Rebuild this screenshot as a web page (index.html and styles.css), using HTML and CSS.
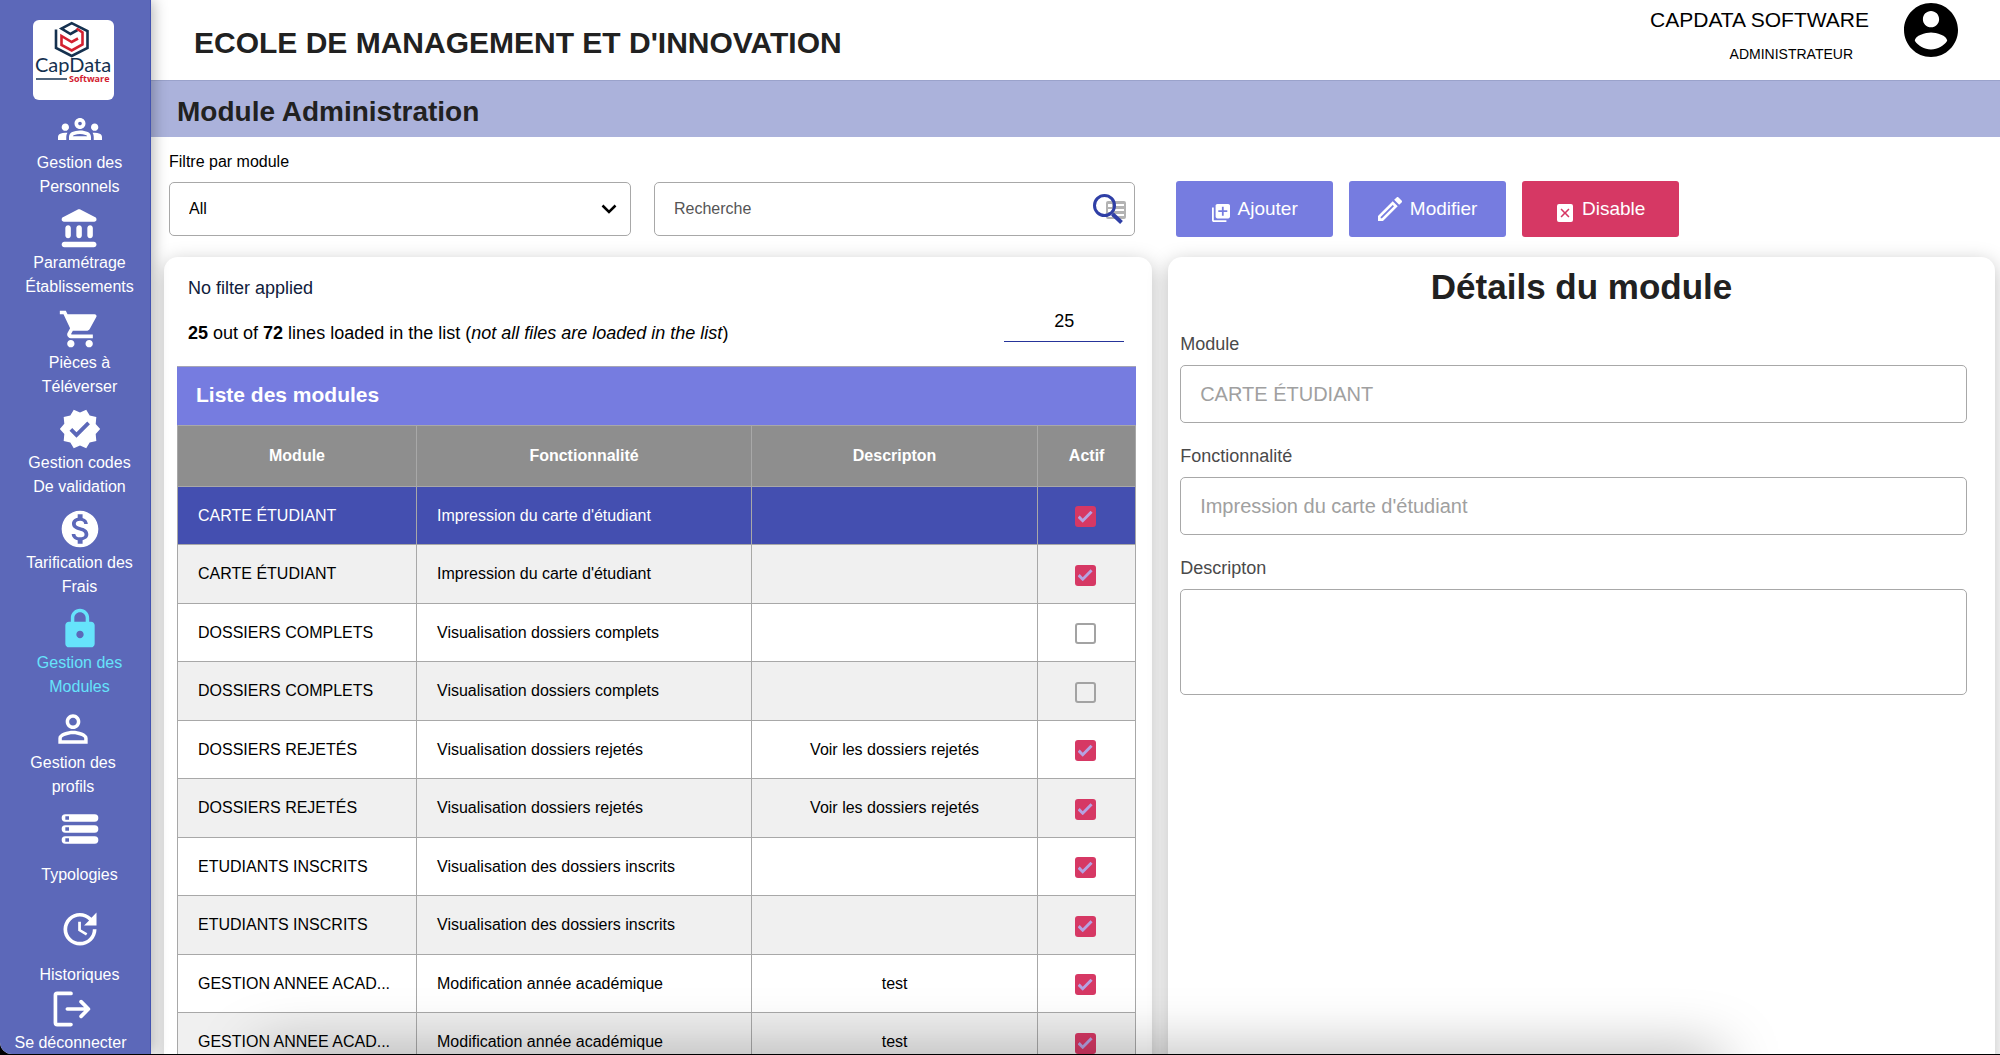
FILE: index.html
```html
<!DOCTYPE html>
<html lang="fr">
<head>
<meta charset="utf-8">
<meta name="viewport" content="width=device-width, initial-scale=1">
<title>Module Administration</title>
<link rel="stylesheet" href="styles.css">
</head>
<body>
<div class="app">
  <aside class="sidebar">
    <a class="brand" href="#" aria-label="CapData Software">
      <svg viewBox="0 0 81 80" width="81" height="80" aria-hidden="true">
        <g fill="none" stroke-width="2.600">
          <path stroke="#15314f" d="M23 9.500v18.500L38.700 36 54.500 28V11L38.700 3.200 28.500 8.500l9 5.500 7-4"/>
          <path stroke="#d3202f" d="M43.500 8.500l6 4v12L38.700 30.500 28.500 25V16l10.200 6 6.300-3.500"/>
        </g>
        <text class="brand-name" x="2" y="52">CapData</text>
        <path d="M3 59h31" stroke="#15314f" stroke-width="1.500"/>
        <text class="brand-sub" x="36" y="62">Software</text>
      </svg>
    </a>
    <nav>
      <ul class="menu">
        <li><a href="#"><svg class="ico" viewBox="0 0 24 24"><path d="M4 13c1.100 0 2-.9 2-2s-.9-2-2-2-2 .9-2 2 .9 2 2 2zm1.130 1.100C4.760 14.040 4.390 14 4 14c-.99 0-1.930.21-2.780.58C.48 14.900 0 15.620 0 16.430V18h4.500v-1.610c0-.83.23-1.610.63-2.290zM20 13c1.100 0 2-.9 2-2s-.9-2-2-2-2 .9-2 2 .9 2 2 2zm4 3.430c0-.81-.48-1.530-1.220-1.850-.85-.37-1.790-.58-2.780-.58-.39 0-.76.04-1.130.1.400.68.630 1.460.63 2.290V18H24v-1.570zM16.240 13.650c-1.170-.52-2.610-.9-4.240-.9s-3.070.39-4.240.9C6.680 14.130 6 15.210 6 16.390V18h12v-1.610c0-1.180-.68-2.260-1.760-2.740zM8.070 16c.09-.23.13-.39.910-.69.97-.38 1.990-.56 3.020-.56s2.050.18 3.020.56c.77.3.81.46.910.69H8.070zM12 8c.55 0 1 .45 1 1s-.45 1-1 1-1-.45-1-1 .45-1 1-1m0-2C10.340 6 9 7.340 9 9s1.340 3 3 3 3-1.340 3-3-1.340-3-3-3z"/></svg><span>Gestion des<br>Personnels</span></a></li>
        <li><a href="#"><svg class="ico" viewBox="0 0 24 24"><path d="M4 11.500v4c0 .83.67 1.500 1.500 1.500S7 16.330 7 15.500v-4c0-.83-.67-1.500-1.500-1.500S4 10.670 4 11.500zm6 0v4c0 .83.67 1.500 1.500 1.500s1.500-.67 1.500-1.500v-4c0-.83-.67-1.500-1.500-1.500s-1.500.67-1.500 1.500zM3.500 22h16c.83 0 1.500-.67 1.500-1.500s-.67-1.500-1.500-1.500h-16c-.83 0-1.500.67-1.500 1.500S2.670 22 3.500 22zM16 11.500v4c0 .83.67 1.500 1.500 1.500s1.500-.67 1.500-1.500v-4c0-.83-.67-1.500-1.500-1.500s-1.500.67-1.500 1.500zM10.570 1.490l-7.900 4.160c-.41.210-.67.640-.67 1.100C2 7.440 2.560 8 3.250 8h16.510C20.440 8 21 7.440 21 6.750c0-.46-.26-.89-.67-1.100l-7.900-4.160c-.58-.31-1.280-.31-1.860 0z"/></svg><span>Paramétrage<br>Établissements</span></a></li>
        <li><a href="#"><svg class="ico" viewBox="0 0 24 24"><path d="M7 18c-1.100 0-1.990.9-1.990 2S5.900 22 7 22s2-.9 2-2-.9-2-2-2zM1 2v2h2l3.600 7.590-1.350 2.450c-.16.280-.25.610-.25.960 0 1.100.9 2 2 2h12v-2H7.420c-.14 0-.25-.11-.25-.25l.03-.12.9-1.630h7.450c.75 0 1.410-.41 1.750-1.030l3.580-6.490c.08-.14.120-.31.120-.48 0-.55-.45-1-1-1H5.210l-.94-2H1zm16 16c-1.100 0-1.990.9-1.990 2s.89 2 1.990 2 2-.9 2-2-.9-2-2-2z"/></svg><span>Pièces à<br>Téléverser</span></a></li>
        <li><a href="#"><svg class="ico" viewBox="0 0 24 24"><path d="M23 12l-2.440-2.790.34-3.690-3.610-.82-1.890-3.200L12 2.960 8.600 1.500 6.710 4.690 3.100 5.500l.34 3.700L1 12l2.440 2.790-.34 3.700 3.610.82L8.600 22.500l3.400-1.470 3.400 1.460 1.890-3.190 3.610-.82-.34-3.690L23 12zm-12.910 4.720l-3.800-3.810 1.480-1.480 2.320 2.330 5.850-5.870 1.480 1.480-7.330 7.350z"/></svg><span>Gestion codes<br>De validation</span></a></li>
        <li><a href="#"><svg class="ico" viewBox="0 0 24 24"><path d="M12 2C6.480 2 2 6.480 2 12s4.480 10 10 10 10-4.480 10-10S17.520 2 12 2zm1.410 16.090V20h-2.670v-1.930c-1.710-.36-3.160-1.460-3.270-3.400h1.960c.1 1.050.82 1.870 2.650 1.870 1.960 0 2.400-.98 2.400-1.590 0-.83-.44-1.610-2.670-2.140-2.480-.6-4.180-1.620-4.180-3.670 0-1.720 1.390-2.840 3.110-3.210V4h2.670v1.950c1.860.45 2.790 1.860 2.850 3.390H14.300c-.05-1.110-.64-1.870-2.220-1.870-1.500 0-2.400.68-2.400 1.640 0 .84.65 1.390 2.670 1.910s4.180 1.390 4.180 3.910c-.01 1.830-1.380 2.830-3.120 3.160z"/></svg><span>Tarification des<br>Frais</span></a></li>
        <li><a class="active" href="#" aria-current="page"><svg class="ico" viewBox="0 0 24 24"><path d="M18 8h-1V6c0-2.760-2.240-5-5-5S7 3.240 7 6v2H6c-1.100 0-2 .9-2 2v10c0 1.100.9 2 2 2h12c1.100 0 2-.9 2-2V10c0-1.100-.9-2-2-2zm-6 9c-1.100 0-2-.9-2-2s.9-2 2-2 2 .9 2 2-.9 2-2 2zm3.100-9H8.900V6c0-1.710 1.390-3.100 3.100-3.100s3.100 1.390 3.100 3.100v2z"/></svg><span>Gestion des<br>Modules</span></a></li>
        <li class="shifted"><a href="#"><svg class="ico" viewBox="0 0 24 24"><path d="M12 5.900c1.160 0 2.100.94 2.100 2.100s-.94 2.100-2.100 2.100S9.900 9.160 9.900 8s.94-2.100 2.100-2.100m0 9c2.970 0 6.100 1.460 6.100 2.100v1.100H5.900V17c0-.64 3.130-2.100 6.100-2.100M12 4C9.790 4 8 5.790 8 8s1.790 4 4 4 4-1.790 4-4-1.790-4-4-4zm0 9c-2.670 0-8 1.340-8 4v3h16v-3c0-2.660-5.330-4-8-4z"/></svg><span>Gestion des<br>profils</span></a></li>
        <li class="single"><a href="#"><svg class="ico" viewBox="0 0 24 24"><path fill-rule="evenodd" d="M4 4h16a2 2 0 0 1 0 4H4a2 2 0 0 1 0-4zm0 1v2h2V5zM4 10h16a2 2 0 0 1 0 4H4a2 2 0 0 1 0-4zm0 1v2h2v-2zM4 16h16a2 2 0 0 1 0 4H4a2 2 0 0 1 0-4zm0 1v2h2v-2z"/></svg><span>Typologies</span></a></li>
        <li class="single last"><a href="#"><svg class="ico" viewBox="0 0 24 24"><path d="M21 10.120h-6.780l2.740-2.820c-2.730-2.700-7.150-2.800-9.880-.1-2.730 2.710-2.730 7.080 0 9.790s7.150 2.710 9.880 0C18.320 15.650 19 14.080 19 12.100h2c0 1.980-.88 4.550-2.640 6.290-3.510 3.480-9.210 3.480-12.720 0-3.500-3.470-3.530-9.110-.02-12.580s9.140-3.470 12.650 0L21 3v7.120zM12.500 8v4.250l3.500 2.080-.72 1.210L11 13V8h1.500z"/></svg><span>Historiques</span></a></li>
      </ul>
    </nav>
    <a class="logout" href="#"><svg class="ico" viewBox="0 0 24 24"><path fill="none" stroke="currentColor" stroke-width="2" stroke-linecap="round" stroke-linejoin="round" d="M12 3.500H4.500a1 1 0 0 0-1 1v15a1 1 0 0 0 1 1H12M10 12h11M17.500 8l4 4-4 4"/></svg><span>Se déconnecter</span></a>
  </aside>

  <div class="page">
    <header class="topbar">
      <h1>ECOLE DE MANAGEMENT ET D'INNOVATION</h1>
      <div class="user">
        <div class="user-text">
          <span class="user-name">CAPDATA SOFTWARE</span>
          <span class="user-role">ADMINISTRATEUR</span>
        </div>
        <svg class="avatar" viewBox="2 2 20 20" aria-hidden="true"><path d="M12 2C6.480 2 2 6.480 2 12s4.480 10 10 10 10-4.480 10-10S17.520 2 12 2zm0 3c1.660 0 3 1.340 3 3s-1.340 3-3 3-3-1.340-3-3 1.340-3 3-3zm0 14.200c-2.500 0-4.710-1.280-6-3.220.03-1.990 4-3.080 6-3.080 1.990 0 5.970 1.090 6 3.080-1.290 1.940-3.500 3.220-6 3.220z"/></svg>
      </div>
    </header>
    <h2 class="band">Module Administration</h2>

    <main>
      <div class="columns toolbar">
        <div class="filters">
          <div class="filter">
            <label for="module-filter">Filtre par module</label>
            <div class="select">
              <select id="module-filter"><option>All</option></select>
              <svg viewBox="0 0 16 10" aria-hidden="true"><path d="M1.500 1.500L8 8l6.500-6.500" fill="none" stroke="#000" stroke-width="2.500"/></svg>
            </div>
          </div>
          <div class="search">
            <input type="text" placeholder="Recherche" aria-label="Recherche">
            <svg viewBox="0 0 34 32" aria-hidden="true">
              <path fill="#b3b3b3" fill-rule="evenodd" d="M15 8h16a2 2 0 0 1 2 2v14a2 2 0 0 1-2 2H15a2 2 0 0 1-2-2V10a2 2 0 0 1 2-2zm0 3v3h4v-3zm7 0v2h9v-2zm-7 5v3h4v-3zm7 0v2h9v-2zm-7 5v3h4v-3zm7 0v2h9v-2z"/>
              <circle cx="11.500" cy="12.500" r="10" fill="none" stroke="#2f3fa6" stroke-width="3"/>
              <path d="M19.500 21l9 8.500" stroke="#2f3fa6" stroke-width="4"/>
            </svg>
          </div>
        </div>
        <div class="actions">
          <button class="btn" type="button"><svg class="low" viewBox="2 2 20 20" width="18" height="18"><path d="M4 6H2v14c0 1.100.9 2 2 2h14v-2H4V6zm16-4H8c-1.100 0-2 .9-2 2v12c0 1.100.9 2 2 2h12c1.100 0 2-.9 2-2V4c0-1.100-.9-2-2-2zm-1 9h-4v4h-2v-4H9V9h4V5h2v4h4v2z"/></svg>Ajouter</button>
          <button class="btn" type="button"><svg viewBox="3 3 18 18" width="24" height="24"><path d="M14.060 9.020l.92.92L5.920 19H5v-.92l9.060-9.060M17.660 3c-.25 0-.51.1-.7.290l-1.830 1.830 3.750 3.750 1.830-1.830c.39-.39.39-1.020 0-1.410l-2.340-2.340c-.2-.2-.45-.29-.71-.29zm-3.600 3.190L3 17.250V21h3.750L17.810 9.940l-3.750-3.750z"/></svg>Modifier</button>
          <button class="btn danger" type="button"><svg class="low" viewBox="0 0 16 18" width="18" height="18"><path fill-rule="evenodd" d="M2 0h12a2 2 0 0 1 2 2v14a2 2 0 0 1-2 2H2a2 2 0 0 1-2-2V2a2 2 0 0 1 2-2zm2.600 4.500L3.500 5.600 6.900 9l-3.400 3.400 1.100 1.100L8 10.100l3.400 3.400 1.100-1.100L9.100 9l3.400-3.400-1.100-1.100L8 7.900z"/></svg>Disable</button>
        </div>
      </div>

      <div class="columns cards">
        <section class="card list">
          <p class="status">No filter applied</p>
          <div class="summary">
            <p><b>25</b> out of <b>72</b> lines loaded in the list (<i>not all files are loaded in the list</i>)</p>
            <input type="text" inputmode="numeric" value="25" aria-label="Lines to load">
          </div>
          <table>
            <caption>Liste des modules</caption>
            <colgroup><col class="c-module"><col class="c-function"><col class="c-desc"><col class="c-active"></colgroup>
            <thead>
              <tr><th scope="col">Module</th><th scope="col">Fonctionnalité</th><th scope="col">Descripton</th><th scope="col">Actif</th></tr>
            </thead>
            <tbody>
              <tr class="selected"><td>CARTE ÉTUDIANT</td><td>Impression du carte d'étudiant</td><td></td><td><input type="checkbox" aria-label="Actif" checked></td></tr>
              <tr><td>CARTE ÉTUDIANT</td><td>Impression du carte d'étudiant</td><td></td><td><input type="checkbox" aria-label="Actif" checked></td></tr>
              <tr><td>DOSSIERS COMPLETS</td><td>Visualisation dossiers complets</td><td></td><td><input type="checkbox" aria-label="Actif"></td></tr>
              <tr><td>DOSSIERS COMPLETS</td><td>Visualisation dossiers complets</td><td></td><td><input type="checkbox" aria-label="Actif"></td></tr>
              <tr><td>DOSSIERS REJETÉS</td><td>Visualisation dossiers rejetés</td><td>Voir les dossiers rejetés</td><td><input type="checkbox" aria-label="Actif" checked></td></tr>
              <tr><td>DOSSIERS REJETÉS</td><td>Visualisation dossiers rejetés</td><td>Voir les dossiers rejetés</td><td><input type="checkbox" aria-label="Actif" checked></td></tr>
              <tr><td>ETUDIANTS INSCRITS</td><td>Visualisation des dossiers inscrits</td><td></td><td><input type="checkbox" aria-label="Actif" checked></td></tr>
              <tr><td>ETUDIANTS INSCRITS</td><td>Visualisation des dossiers inscrits</td><td></td><td><input type="checkbox" aria-label="Actif" checked></td></tr>
              <tr><td>GESTION ANNEE ACAD...</td><td>Modification année académique</td><td>test</td><td><input type="checkbox" aria-label="Actif" checked></td></tr>
              <tr><td>GESTION ANNEE ACAD...</td><td>Modification année académique</td><td>test</td><td><input type="checkbox" aria-label="Actif" checked></td></tr>
            </tbody>
          </table>
        </section>

        <section class="card details">
          <h2>Détails du module</h2>
          <form>
            <div class="field"><label for="d-module">Module</label><input id="d-module" type="text" value="CARTE ÉTUDIANT" disabled></div>
            <div class="field"><label for="d-function">Fonctionnalité</label><input id="d-function" type="text" value="Impression du carte d'étudiant" disabled></div>
            <div class="field"><label for="d-desc">Descripton</label><textarea id="d-desc" disabled></textarea></div>
          </form>
        </section>
      </div>
    </main>
  </div>
  <div class="glow"></div>
</div>
</body>
</html>
```
FILE: styles.css
```css
* { box-sizing: border-box; }

body {
  margin: 0;
  background: #000;
  color: #000;
  font-family: "Liberation Sans", Arial, Helvetica, sans-serif;
  font-size: 16px;
  line-height: 24px;
}

h1, h2, p { margin: 0; }
a { color: inherit; text-decoration: none; }
input, select, textarea, button { font: inherit; color: inherit; }

.app {
  position: relative;
  display: flex;
  height: calc(100vh - 1px);
  overflow: hidden;
  background: #fff;
  border-radius: 0 0 0 12px;
}

/* Sidebar */
.sidebar {
  flex: 0 0 151px;
  z-index: 1;
  display: flex;
  flex-direction: column;
  padding-top: 20px;
  background: #5c68b9;
  border-right: 1px solid #4353b0;
  box-shadow: 2px 0 14px rgba(0, 0, 0, .3);
  color: #fff;
  text-align: center;
}
.brand {
  display: block;
  width: 81px;
  height: 80px;
  margin: 0 0 7px 33px;
  background: #fff;
  border-radius: 6px;
}
.brand-name { font: 20px "Lato", sans-serif; fill: #15314f; }
.brand-sub { font: bold 9px "Open Sans", sans-serif; fill: #d3202f; }
.menu {
  margin: 0;
  padding: 0 0 0 9px;
  list-style: none;
}
.menu li { min-height: 100px; }
.menu a, .logout {
  display: flex;
  flex-direction: column;
  align-items: center;
}
.ico { width: 44px; height: 44px; fill: currentColor; }
.active { color: #66e3fb; }
.menu .shifted { padding-right: 13px; }
.menu .single span { padding-top: 12px; }
.menu .last { min-height: 80px; }
.logout { padding-right: 9px; }

/* Header */
.page { flex: 1; min-width: 0; }
.topbar {
  display: flex;
  align-items: center;
  justify-content: space-between;
  height: 80px;
  padding: 0 42px 0 43px;
}
h1 { font-size: 30px; line-height: 40px; color: #212121; padding-top: 5px; }
.user { display: flex; align-self: flex-start; gap: 35px; padding-top: 3px; }
.user-text { display: flex; flex-direction: column; align-items: flex-end; gap: 4px; padding-top: 5px; }
.user-name { font-size: 21px; }
.user-role { font-size: 14px; padding: 6px 16px 0 0; }
.avatar { width: 54px; height: 54px; }
.band {
  height: 57px;
  padding-left: 26px;
  background: #abb2db;
  border-top: 1px solid #9aa2cb;
  font-size: 28px;
  line-height: 61px;
  color: #212121;
}

/* Toolbar */
main { padding: 13px 5px 0 13px; }
.columns {
  display: grid;
  grid-template-columns: minmax(0, 49fr) minmax(0, 41fr);
  gap: 16px;
}
.toolbar { align-items: end; padding-bottom: 20px; }
.filters {
  display: grid;
  grid-template-columns: 24fr 25fr;
  align-items: end;
  gap: 23px;
  padding: 0 17px 1px 5px;
}
.filter { display: flex; flex-direction: column; gap: 8px; }
.select { display: grid; align-items: center; }
.select select, .select svg { grid-area: 1 / 1; }
.select svg { justify-self: end; width: 16px; height: 10px; margin-right: 14px; pointer-events: none; }
.select select {
  appearance: none;
  width: 100%;
  height: 54px;
  padding: 0 40px 0 19px;
  background: #fff;
  border: 1px solid #a8a8a8;
  border-radius: 5px;
}
.search {
  display: flex;
  align-items: center;
  height: 54px;
  padding: 0 7px 0 19px;
  border: 1px solid #a8a8a8;
  border-radius: 5px;
}
.search input { flex: 1; min-width: 0; padding: 0; border: 0; outline: 0; background: none; }
.search input::placeholder { color: #555; opacity: 1; }
.search svg { width: 34px; height: 32px; }
.actions { display: flex; gap: 16px; padding-left: 8px; }
.btn {
  display: flex;
  align-items: center;
  justify-content: center;
  gap: 8px;
  width: 157px;
  height: 56px;
  padding: 0;
  border: 0;
  border-radius: 3px;
  background: #767ce0;
  color: #fff;
  font-size: 19px;
}
.btn svg { fill: currentColor; }
.btn .low { margin-top: 8px; }
.danger { background: #d63864; }

/* Cards */
.card {
  height: 830px;
  background: #fff;
  border-radius: 14px;
  box-shadow: 0 5px 20px rgba(0, 0, 0, .26);
}
.list { padding: 19px 16px 0 13px; }
.status { padding-left: 11px; font-size: 18px; color: #10203c; }
.summary {
  display: flex;
  align-items: flex-end;
  justify-content: space-between;
  height: 45px;
  padding: 0 12px 0 11px;
  font-size: 18px;
}
.summary input {
  width: 120px;
  height: 41px;
  margin-bottom: 3px;
  padding: 0;
  border: 0;
  border-bottom: 1px solid #26349a;
  background: none;
  text-align: center;
}

table {
  width: 100%;
  margin-top: 21px;
  border-collapse: collapse;
  table-layout: fixed;
}
caption {
  height: 59px;
  padding-left: 19px;
  background: #767ce0;
  border-top: 1px solid #a5a5b5;
  color: #fff;
  font-size: 21px;
  font-weight: bold;
  line-height: 56px;
  text-align: left;
}
/* Shares of the table's width */
.c-module { width: 239px; }
.c-function { width: 335px; }
.c-desc { width: 286px; }
.c-active { width: 98px; }
th, td { padding: 0 20px; border: 1px solid #a8a8a8; white-space: nowrap; }
th { height: 61px; background: #8e8e8e; color: #fff; }
td { height: 58px; }
tr:nth-child(even) td { height: 59px; background: #f0f0f0; }
.selected td { background: #444fb0; color: #fff; }
td:nth-child(n+3) { text-align: center; }
td:last-child { padding: 0 3px 0 0; }

input[type="checkbox"] {
  appearance: none;
  display: inline-grid;
  place-content: center;
  width: 21px;
  height: 21px;
  margin: 1px 0 0;
  border: 2px solid #a3a3a3;
  border-radius: 3px;
  vertical-align: middle;
}
input[type="checkbox"]:checked { border: 0; background: #d63864; }
input[type="checkbox"]:checked::before {
  content: "";
  width: 15px;
  height: 12px;
  background: #b5a2e2;
  clip-path: polygon(0 58%, 14% 40%, 34% 66%, 86% 0, 100% 16%, 34% 100%);
}

.details h2 { padding-top: 10px; font-size: 35px; line-height: 40px; color: #212121; text-align: center; }
.details form { display: grid; gap: 21px; padding: 25px 28px 0 12px; }
.field { display: grid; gap: 9px; }
.field label { font-size: 18px; color: #4a4a4a; }
.field input, .field textarea {
  width: 100%;
  height: 58px;
  padding: 0 19px;
  border: 1px solid #a8a8a8;
  border-radius: 5px;
  background: #fff;
  color: #a0a0a0;
  font-size: 20px;
}
.field textarea { height: 106px; resize: none; }

/* Soft shade along the bottom edge */
.glow {
  position: absolute;
  z-index: 2;
  right: 280px;
  bottom: -40px;
  left: 260px;
  height: 40px;
  box-shadow: 0 0 60px rgba(0, 0, 0, .35);
  pointer-events: none;
}
```
